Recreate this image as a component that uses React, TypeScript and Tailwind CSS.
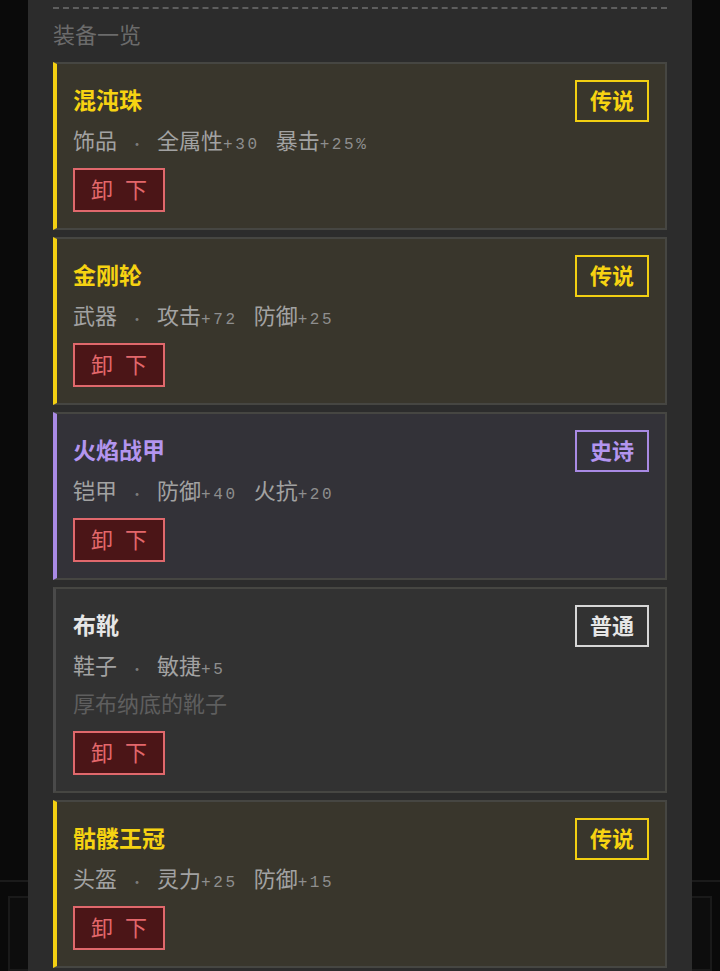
type Rarity = 'legend' | 'epic' | 'common';

type Item = {
  name: string;
  slot: string;
  rarity: Rarity;
  stats: [string, string][];
  desc?: string;
};

const items: Item[] = [
  { name: '混沌珠', slot: '饰品', rarity: 'legend', stats: [['全属性', '+30'], ['暴击', '+25%']] },
  { name: '金刚轮', slot: '武器', rarity: 'legend', stats: [['攻击', '+72'], ['防御', '+25']] },
  { name: '火焰战甲', slot: '铠甲', rarity: 'epic', stats: [['防御', '+40'], ['火抗', '+20']] },
  { name: '布靴', slot: '鞋子', rarity: 'common', stats: [['敏捷', '+5']], desc: '厚布纳底的靴子' },
  { name: '骷髅王冠', slot: '头盔', rarity: 'legend', stats: [['灵力', '+25'], ['防御', '+15']] },
];

const rarityStyle: Record<Rarity, { card: string; title: string; badge: string; label: string }> = {
  legend: {
    card: 'bg-[#39362c] border-l-4 border-l-[#f2cf12]',
    title: 'text-[#f6d312]',
    badge: 'border-[#f2cf12] text-[#f6d312]',
    label: '传说',
  },
  epic: {
    card: 'bg-[#333238] border-l-4 border-l-[#a98ae4]',
    title: 'text-[#b395ef]',
    badge: 'border-[#a98ae4] text-[#b395ef]',
    label: '史诗',
  },
  common: {
    card: 'bg-[#323232] border-l-[3px] border-l-[#4a4a4a]',
    title: 'text-[#e6e6e6]',
    badge: 'border-[#d6d6d6] text-[#e6e6e6]',
    label: '普通',
  },
};

function ItemCard({ item }: { item: Item }) {
  const s = rarityStyle[item.rarity];
  const pad = item.rarity === 'common' ? 'pl-[17px]' : 'pl-4';
  return (
    <div className={`border-2 border-[#464642] ${s.card} ${pad} pr-4 pt-4 pb-4`}>
      <div className="flex items-center justify-between h-[42px]">
        <div className={`pb-1 text-[23px] font-bold leading-[30px] ${s.title}`}>{item.name}</div>
        <div
          className={`h-[42px] border-2 px-[13px] pb-1 text-[22px] font-bold leading-[34px] ${s.badge}`}
        >
          {s.label}
        </div>
      </div>
      <div className="mt-1 flex items-baseline h-[30px] text-[22px] leading-[26px] text-[#a2a2a2]">
        <span>{item.slot}</span>
        <span className="w-10 text-center text-[14px] text-[#7a7a7a]">·</span>
        <div className="flex items-baseline gap-[16px]">
          {item.stats.map(([k, v]) => (
            <span key={k} className="flex items-baseline">
              <span>{k}</span>
              <span className="font-['Liberation_Mono',monospace] text-[16px] tracking-[2.6px] text-[#8e8e8e]">
                {v}
              </span>
            </span>
          ))}
        </div>
      </div>
      {item.desc && (
        <div className="mt-2 h-[30px] text-[22px] leading-[26px] text-[#5e5e5e]">{item.desc}</div>
      )}
      <button className="mt-3 h-[44px] w-[92px] border-2 border-[#e0686c] bg-[#4b1517] pl-4 pr-1 pb-1 text-left text-[22px] leading-[36px] tracking-[12px] text-[#e3676b]">
        卸下
      </button>
    </div>
  );
}

export default function App() {
  return (
    <div className="relative h-[971px] overflow-hidden bg-[#0a0a0a] font-['Noto_Sans_CJK_SC','Noto_Sans',sans-serif]">
      {/* page behind the sheet */}
      <div className="flex h-full flex-col">
        <div className="flex-1" />
        <div className="h-[91px] border-t-2 border-[#1b1b1b] px-2 pt-[14px]">
          <div className="h-full border-2 border-[#1a1a1a] bg-[#0d0d0d]" />
        </div>
      </div>

      {/* equipment sheet */}
      <div className="absolute inset-0 flex justify-center">
        <div className="h-full w-[664px] overflow-hidden bg-[#2c2c2c] px-[25px] pt-[7px]">
          <div className="border-t-2 border-dashed border-[#5e5e5e]" />
          <div className="mt-2 h-[30px] pt-[3px] text-[22px] leading-[26px] text-[#6b6b6b]">装备一览</div>
          <div className="mt-[15px] flex flex-col gap-[7px]">
            {items.map((it) => (
              <ItemCard key={it.name} item={it} />
            ))}
          </div>
        </div>
      </div>
    </div>
  );
}
